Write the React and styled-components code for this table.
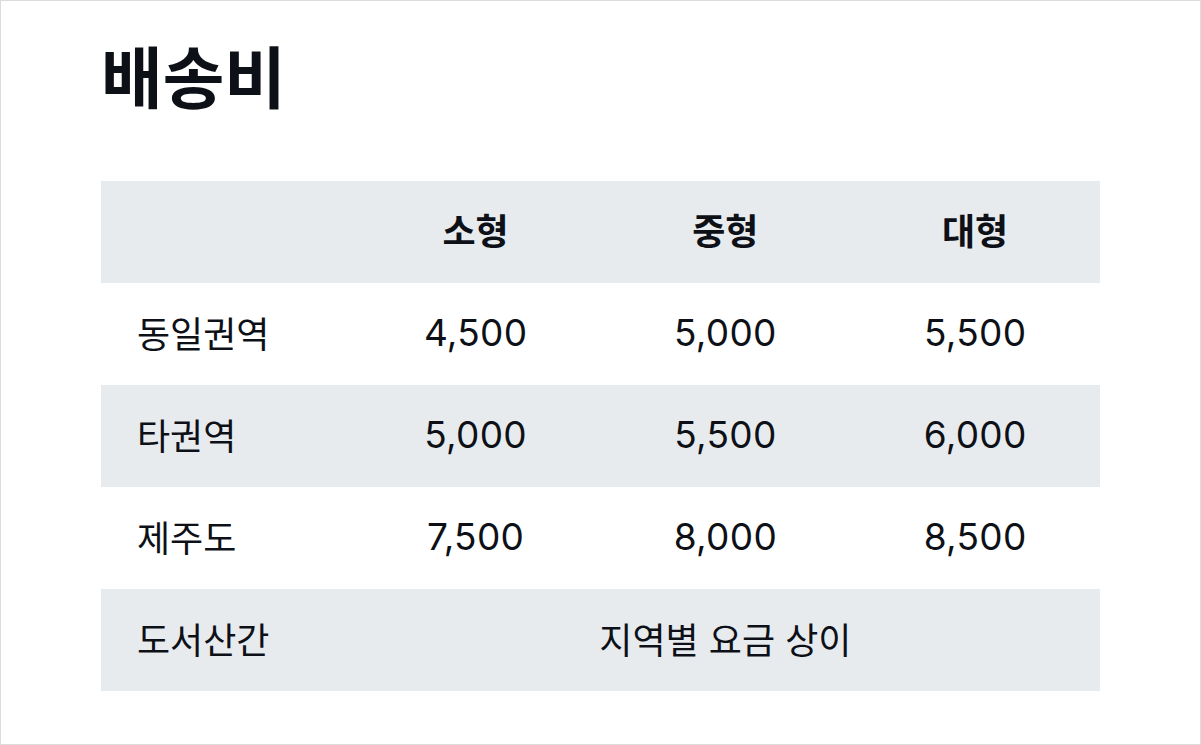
import styled, { createGlobalStyle } from "styled-components";

const GlobalStyle = createGlobalStyle`
  html, body {
    margin: 0;
    padding: 0;
    background: #fff;
  }
  body {
    font-family: Inter, "Noto Sans CJK KR", sans-serif;
    color: #0d1117;
  }
`;

const ROWS = [
  { name: "동일권역", values: ["4,500", "5,000", "5,500"] },
  { name: "타권역", values: ["5,000", "5,500", "6,000"] },
  { name: "제주도", values: ["7,500", "8,000", "8,500"] },
];

const Page = styled.div`
  box-sizing: border-box;
  width: 1201px;
  height: 745px;
  border: 1px solid #dcdcdc;
  padding: 36px 100px 0 100px;
`;

const Title = styled.h1`
  margin: 0 0 60px 0;
  font-size: 67px;
  font-weight: 700;
  line-height: 84px;
  font-family: Inter, "Noto Sans CJK KR", sans-serif;
`;

const Table = styled.table`
  width: 999px;
  border-collapse: collapse;
  table-layout: fixed;
`;

const Row = styled.tr`
  height: 102px;
  background: ${(p) => (p.$shaded ? "#e8ebee" : "#fff")};
`;

const HeadCell = styled.th`
  font-size: 36px;
  font-weight: 700;
  text-align: center;
  padding: 0 0 6px 0;
`;

const LabelCell = styled.td`
  font-size: 36px;
  font-weight: 400;
  text-align: left;
  padding: 0 0 4px 36px;
`;

const ValueCell = styled.td`
  font-size: ${(p) => (p.$text ? "36px" : "37px")};
  font-weight: 400;
  text-align: center;
  padding: 0 0 4px 0;
  letter-spacing: ${(p) => (p.$text ? "0" : "0.3px")};
`;

export default function App() {
  return (
    <Page>
      <GlobalStyle />
      <Title>배송비</Title>
      <Table>
        <thead>
          <Row $shaded>
            <HeadCell />
            <HeadCell>소형</HeadCell>
            <HeadCell>중형</HeadCell>
            <HeadCell>대형</HeadCell>
          </Row>
        </thead>
        <tbody>
          {ROWS.map((row, i) => (
            <Row key={row.name} $shaded={i % 2 === 1}>
              <LabelCell>{row.name}</LabelCell>
              {row.values.map((v, j) => (
                <ValueCell key={j}>{v}</ValueCell>
              ))}
            </Row>
          ))}
          <Row $shaded>
            <LabelCell>도서산간</LabelCell>
            <ValueCell colSpan={3} $text>
              지역별 요금 상이
            </ValueCell>
          </Row>
        </tbody>
      </Table>
    </Page>
  );
}
